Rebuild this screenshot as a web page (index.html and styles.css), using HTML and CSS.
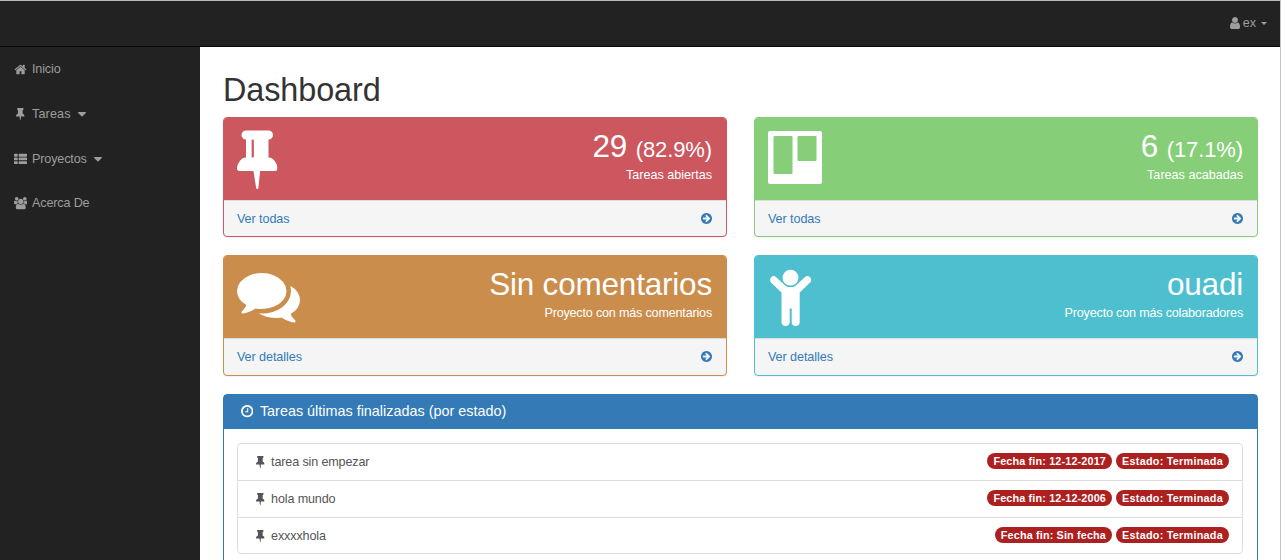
FILE: index.html
```html
<!DOCTYPE html>
<html lang="es">
<head>
<meta charset="utf-8">
<title>Dashboard</title>
<link rel="stylesheet" href="styles.css">
</head>
<body>
<svg class="sprite" aria-hidden="true">
  <symbol id="pin" viewBox="320 0 1152 1792"><path d="M800 864v-448q0-14-9-23t-23-9-23 9-9 23v448q0 14 9 23t23 9 23-9 9-23zm672 352q0 26-19 45t-45 19h-429l-51 483q-2 12-10.500 20.500t-20.500 8.500h-1q-27 0-32-27l-76-485h-404q-26 0-45-19t-19-45q0-123 78.500-221.500t177.500-98.500v-512q-52 0-90-38t-38-90 38-90 90-38h640q52 0 90 38t38 90-38 90-90 38v512q99 0 177.500 98.500t78.500 221.500z"/></symbol>
  <symbol id="pin-small" viewBox="320 0 1152 1792"><path d="M1472 1216q0 26-19 45t-45 19h-429l-51 483q-2 12-10.500 20.500t-20.500 8.500h-1q-27 0-32-27l-76-485h-404q-26 0-45-19t-19-45q0-123 78.500-221.500t177.500-98.500v-512q-52 0-90-38t-38-90 38-90 90-38h640q52 0 90 38t38 90-38 90-90 38v512q99 0 177.500 98.500t78.500 221.500z"/></symbol>
  <symbol id="home" viewBox="0 0 1792 1792"><path d="M1472 992v480q0 26-19 45t-45 19h-384v-384h-256v384h-384q-26 0-45-19t-19-45v-480q0-1 .5-3t.5-3l575-474 575 474q1 2 1 6zm223-69l-62 74q-8 9-21 11h-3q-13 0-21-7l-692-577-692 577q-12 8-24 7-13-2-21-11l-62-74q-8-10-7-23.500t11-21.500l719-599q32-26 76-26t76 26l244 204v-195q0-14 9-23t23-9h192q14 0 23 9t9 23v408l219 182q10 8 11 21.500t-7 23.500z"/></symbol>
  <symbol id="list" viewBox="0 0 1792 1792"><path d="M96 256h320q96 0 96 96v192q0 96-96 96h-320q-96 0-96-96v-192q0-96 96-96zM96 768h320q96 0 96 96v192q0 96-96 96h-320q-96 0-96-96v-192q0-96 96-96zM96 1280h320q96 0 96 96v192q0 96-96 96h-320q-96 0-96-96v-192q0-96 96-96zM736 256h960q96 0 96 96v192q0 96-96 96h-960q-96 0-96-96v-192q0-96 96-96zM736 768h960q96 0 96 96v192q0 96-96 96h-960q-96 0-96-96v-192q0-96 96-96zM736 1280h960q96 0 96 96v192q0 96-96 96h-960q-96 0-96-96v-192q0-96 96-96z"/></symbol>
  <symbol id="users" viewBox="0 0 1920 1792"><path d="M593 896q-162 5-265 128h-134q-82 0-138-40.500t-56-118.500q0-353 124-353 6 0 43.500 21t97.500 42.500 119 21.500q67 0 133-23-5 37-5 66 0 139 81 256zm1071 637q0 120-73 189.500t-194 69.500h-874q-121 0-194-69.500t-73-189.500q0-53 3.500-103.500t14-109 26.500-108.500 43-97.500 62-81 85.500-53.500 111.500-20q10 0 43 21.500t73 48 107 48 135 21.500 135-21.500 107-48 73-48 43-21.500q61 0 111.500 20t85.500 53.500 62 81 43 97.500 26.500 108.500 14 109 3.500 103.500zm-1024-1277q0 106-75 181t-181 75-181-75-75-181 75-181 181-75 181 75 75 181zm704 384q0 159-112.500 271.500t-271.500 112.500-271.500-112.500-112.500-271.500 112.500-271.500 271.500-112.500 271.500 112.500 112.500 271.500zm576 225q0 78-56 118.500t-138 40.500h-134q-103-123-265-128 81-117 81-256 0-29-5-66 66 23 133 23 59 0 119-21.500t97.500-42.500 43.500-21q124 0 124 353zm-128-609q0 106-75 181t-181 75-181-75-75-181 75-181 181-75 181 75 75 181z"/></symbol>
  <symbol id="user" viewBox="256 0 1280 1792"><path d="M1536 1399q0 109-62.500 187t-150.500 78h-854q-88 0-150.500-78t-62.500-187q0-85 8.500-160.500t31.500-152 58.500-131 94-89 134.500-34.500q131 128 313 128t313-128q76 0 134.500 34.500t94 89 58.500 131 31.500 152 8.500 160.500zm-256-887q0 159-112.500 271.500t-271.500 112.500-271.500-112.500-112.500-271.500 112.500-271.500 271.500-112.500 271.500 112.500 112.500 271.500z"/></symbol>
  <symbol id="arrow" viewBox="128 0 1536 1792"><path d="M1413 896q0-27-18-45l-91-91-362-362q-18-18-45-18t-45 18l-91 91q-18 18-18 45t18 45l189 189h-502q-26 0-45 19t-19 45v128q0 26 19 45t45 19h502l-189 189q-19 19-19 45t19 45l91 91q18 18 45 18t45-18l362-362 91-91q18-18 18-45zm251 0q0 209-103 385.500t-279.500 279.500-385.500 103-385.500-103-279.500-279.500-103-385.500 103-385.500 279.500-279.500 385.500-103 385.500 103 279.500 279.500 103 385.500z"/></symbol>
  <symbol id="clock" viewBox="128 0 1536 1792"><path d="M1024 544v448q0 14-9 23t-23 9h-320q-14 0-23-9t-9-23v-64q0-14 9-23t23-9h224v-352q0-14 9-23t23-9h64q14 0 23 9t9 23zm416 352q0-148-73-273t-198-198-273-73-273 73-198 198-73 273 73 273 198 198 273 73 273-73 198-198 73-273zm224 0q0 209-103 385.500t-279.500 279.500-385.500 103-385.500-103-279.500-279.500-103-385.500 103-385.500 279.500-279.500 385.500-103 385.500 103 279.500 279.500 103 385.500z"/></symbol>
  <symbol id="comments" viewBox="0 0 1792 1792"><path d="M1408 768q0 139-94 257t-256.500 186.500-353.500 68.500q-86 0-176-16-124 88-278 128-36 9-86 16h-3q-11 0-20.500-8t-11.500-21q-1-3-1-6.500t.5-6.500 2-6l2.500-5 3.500-5.500 4-5 4.500-5 4-4.500q5-6 23-25t26-29.500 22.500-29 25-38.500 20.500-44q-124-72-195-177t-71-224q0-139 94-257t256.500-186.500 353.500-68.500 353.500 68.500 256.500 186.500 94 257zm384 256q0 120-71 224.500t-195 176.500q10 24 20.500 44t25 38.500 22.500 29 26 29.500 23 25q1 1 4 4.500t4.500 5 4 5 3.500 5.500l2.500 5 2 6 .5 6.500-1 6.500q-3 14-13 22t-22 7q-50-7-86-16-154-40-278-128-90 16-176 16-271 0-472-132 58 4 88 4 161 0 309-45t264-129q125-92 192-212t67-254q0-77-23-152 129 71 204 178t75 230z"/></symbol>
  <symbol id="caret" viewBox="0 0 8 5"><path d="M.5 0h7q.8.300.3 1L4.500 4.300q-.5.400-1 0L.200 1q-.5-.7.300-1z"/></symbol>
</svg>

<header class="navbar">
  <a class="user-menu"><svg class="ico-user"><use href="#user"/></svg><span>ex</span><i class="caret-small"></i></a>
</header>

<div class="layout">
  <nav class="sidebar">
    <a class="nav-item"><span class="nav-icon"><svg class="ico-wide"><use href="#home"/></svg></span>Inicio</a>
    <a class="nav-item loose"><span class="nav-icon"><svg class="ico-pin"><use href="#pin-small"/></svg></span>Tareas<svg class="caret"><use href="#caret"/></svg></a>
    <a class="nav-item"><span class="nav-icon"><svg class="ico-wide"><use href="#list"/></svg></span>Proyectos<svg class="caret"><use href="#caret"/></svg></a>
    <a class="nav-item"><span class="nav-icon"><svg class="ico-users"><use href="#users"/></svg></span>Acerca De</a>
  </nav>

  <main class="content">
    <h1 class="title">Dashboard</h1>
    <div class="cards">
      <section class="card red">
        <div class="card-head">
          <svg class="big-pin"><use href="#pin"/></svg>
          <div class="stat"><div class="huge">29 <small>(82.9%)</small></div><div class="caption">Tareas abiertas</div></div>
        </div>
        <a class="card-foot"><span>Ver todas</span><svg class="ico-arrow"><use href="#arrow"/></svg></a>
      </section>
      <section class="card green">
        <div class="card-head">
          <svg class="big-board" viewBox="0 0 54 63"><path fill-rule="evenodd" d="M2 5h50q2 0 2 2v49q0 2-2 2H2q-2 0-2-2v-49q0-2 2-2zM6.500 10q-1 0-1 1v36q0 1 1 1h17q1 0 1-1v-36q0-1-1-1zM30.500 10q-1 0-1 1v23q0 1 1 1h17q1 0 1-1v-23q0-1-1-1z"/></svg>
          <div class="stat"><div class="huge">6 <small>(17.1%)</small></div><div class="caption">Tareas acabadas</div></div>
        </div>
        <a class="card-foot"><span>Ver todas</span><svg class="ico-arrow"><use href="#arrow"/></svg></a>
      </section>
      <section class="card orange tall">
        <div class="card-head">
          <svg class="big-comments"><use href="#comments"/></svg>
          <div class="stat"><div class="huge">Sin comentarios</div><div class="caption">Proyecto con más comentarios</div></div>
        </div>
        <a class="card-foot"><span>Ver detalles</span><svg class="ico-arrow"><use href="#arrow"/></svg></a>
      </section>
      <section class="card teal tall">
        <div class="card-head">
          <svg class="big-child" viewBox="0 0 45 63"><circle cx="22.500" cy="13.700" r="7.900"/><path d="M3.200 13.200Q5.700 11 8.200 13.200L18 22.200Q22.500 24 27 22.200L36.800 13.200Q39.500 11 42 13.200Q44.400 15.800 42.200 18.500L31.700 28.500V58.200Q31.200 62 27.700 62Q24 62 23.700 58.200V44.500H21.700V58.200Q21.300 62 17.500 62Q13.900 62 13.500 58.200V28.500L3 18.500Q.900 15.800 3.200 13.200z"/></svg>
          <div class="stat"><div class="huge">ouadi</div><div class="caption">Proyecto con más colaboradores</div></div>
        </div>
        <a class="card-foot"><span>Ver detalles</span><svg class="ico-arrow"><use href="#arrow"/></svg></a>
      </section>
    </div>

    <section class="panel">
      <h2 class="panel-head"><svg class="ico-clock"><use href="#clock"/></svg><span>Tareas últimas finalizadas (por estado)</span></h2>
      <ul class="tasks">
        <li class="task"><svg class="ico-pin"><use href="#pin-small"/></svg><span class="name">tarea sin empezar</span><span class="badge">Fecha fin: 12-12-2017</span><span class="badge state">Estado: Terminada</span></li>
        <li class="task"><svg class="ico-pin"><use href="#pin-small"/></svg><span class="name">hola mundo</span><span class="badge">Fecha fin: 12-12-2006</span><span class="badge state">Estado: Terminada</span></li>
        <li class="task"><svg class="ico-pin"><use href="#pin-small"/></svg><span class="name">exxxxhola</span><span class="badge">Fecha fin: Sin fecha</span><span class="badge state">Estado: Terminada</span></li>
      </ul>
    </section>
  </main>
</div>
</body>
</html>
```
FILE: styles.css
```css
* { box-sizing: border-box; }
html { overflow: hidden; }
body {
  margin: 0;
  height: 560px;
  overflow: hidden;
  border-top: 1px solid #b9b9b9;
  border-right: 1px solid #c4c4c4;
  background: #fff;
  color: #333;
  font: 12.6px/18px "Liberation Sans", Arial, sans-serif;
}
svg { display: block; flex: none; fill: currentColor; }
.sprite { display: none; }

.navbar {
  display: flex;
  justify-content: flex-end;
  height: 46px;
  padding-right: 13px;
  background: #222;
  border-bottom: 1px solid #080808;
}
.user-menu { display: flex; align-items: center; height: 44px; color: #9d9d9d; }
.ico-user { width: 10px; height: 14px; margin: -1px 3px 0 0; }
.caret-small { margin-left: 5px; border: 3.5px solid transparent; border-top-color: currentColor; border-bottom: 0; }

.layout { display: flex; height: 513px; }
.sidebar { width: 200px; flex: none; background: #222; color: #9d9d9d; }
.nav-item { display: flex; align-items: center; height: 44.7px; padding-left: 14px; letter-spacing: -.15px; }
.nav-item.loose { letter-spacing: .15px; }
.nav-icon { display: flex; justify-content: center; width: 13px; margin-right: 5px; }
.ico-wide { width: 13px; height: 13px; }
.ico-users { width: 13.5px; height: 12.6px; }
.ico-pin { width: 8.6px; height: 13.4px; }
.caret { width: 8px; height: 5px; margin: 1px 0 0 7px; }

.content { flex: 1; padding: 25px 22px 0 23px; overflow: hidden; }
.title { margin: 0 0 9px; font-size: 32.4px; line-height: 36px; font-weight: 400; letter-spacing: -.1px; }
.cards { display: grid; grid-template-columns: 1fr 1fr; gap: 18px 27px; }
.card {
  display: grid;
  grid-template-rows: 82px 1fr;
  height: 120px;
  border: 1px solid var(--tone);
  border-radius: 4px;
  background: #f5f5f5;
  box-shadow: 0 1px 1px rgba(0, 0, 0, .05);
  overflow: hidden;
}
.tall { height: 121px; }
.red { --tone: #cc575f; }
.green { --tone: #86ce78; }
.orange { --tone: #cb8d4c; }
.teal { --tone: #4dbfce; }
.card-head { display: flex; justify-content: space-between; padding: 8px 14px 0 13px; background: var(--tone); color: #fff; }
.big-pin { width: 40.5px; height: 63px; }
.big-board { width: 54px; height: 63px; }
.big-comments { width: 63px; height: 63px; }
.big-child { width: 45px; height: 63px; }
.stat { text-align: right; padding-top: 4px; }
.huge { height: 36px; font-size: 31.5px; line-height: 33px; letter-spacing: -.2px; }
.huge small { font-size: 22px; line-height: 1; letter-spacing: -.1px; }
.tall .huge { line-height: 32px; }
.tall .caption { letter-spacing: -.19px; }
.card-foot { display: flex; justify-content: space-between; align-items: center; padding: 0 14px 0 13px; border-top: 1px solid #ddd; color: #337ab7; letter-spacing: -.08px; }
.ico-arrow { width: 11px; height: 13px; }
.tall .ico-arrow { margin-top: -1px; }

.panel { margin-top: 18px; height: 200px; border: 1px solid #337ab7; border-radius: 4px; }
.panel-head { display: flex; align-items: center; gap: 6.5px; height: 34px; margin: 0; padding: 0 17px 2px; background: #337ab7; color: #fff; font-size: 14.4px; font-weight: 400; }
.ico-clock { width: 12.4px; height: 14.4px; }
.tasks { margin: 14px 14px 0 13px; padding: 0; list-style: none; border: 1px solid #ddd; border-radius: 4px; }
.task { display: flex; align-items: center; height: 36px; padding: 0 13px 0 18px; color: #555; }
.task + .task { height: 37px; border-top: 1px solid #ddd; }
.task + .task:last-child { height: 36px; }
.name { flex: 1; padding-left: 6.5px; letter-spacing: -.15px; }
.badge { height: 16px; margin: -2px 0 0 4px; padding: 0 6px; border-radius: 9px; background: #ad2020; color: #fff; font-size: 10.8px; line-height: 16px; font-weight: 700; letter-spacing: .16px; }
.state { letter-spacing: .27px; }
```
